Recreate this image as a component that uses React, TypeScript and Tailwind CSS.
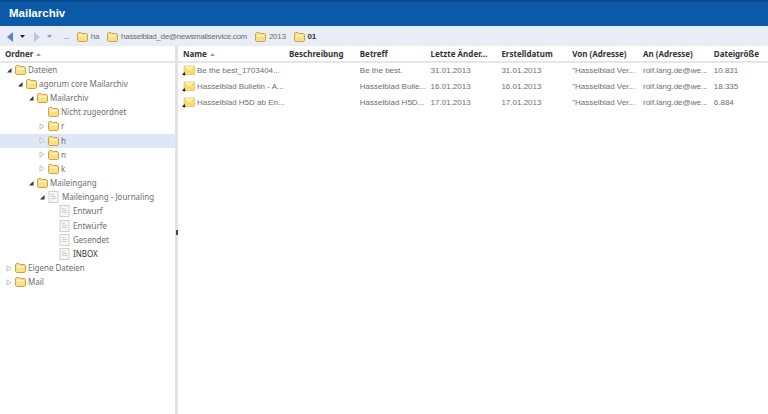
const tree = [
  { label: "Dateien", level: 0, arrow: "open", icon: "folder" },
  { label: "agorum core Mailarchiv", level: 1, arrow: "open", icon: "folder" },
  { label: "Mailarchiv", level: 2, arrow: "open", icon: "folder" },
  { label: "Nicht zugeordnet", level: 3, arrow: "none", icon: "folder" },
  { label: "r", level: 3, arrow: "closed", icon: "folder" },
  { label: "h", level: 3, arrow: "closed", icon: "folder", selected: true },
  { label: "n", level: 3, arrow: "closed", icon: "folder" },
  { label: "k", level: 3, arrow: "closed", icon: "folder" },
  { label: "Maileingang", level: 2, arrow: "open", icon: "folder" },
  { label: "Maileingang - Journaling", level: 3, arrow: "open", icon: "doc" },
  { label: "Entwurf", level: 4, arrow: "none", icon: "doc" },
  { label: "Entwürfe", level: 4, arrow: "none", icon: "doc" },
  { label: "Gesendet", level: 4, arrow: "none", icon: "doc" },
  { label: "INBOX", level: 4, arrow: "none", icon: "doc", dark: true },
  { label: "Eigene Dateien", level: 0, arrow: "closed", icon: "folder" },
  { label: "Mail", level: 0, arrow: "closed", icon: "folder" },
]

const columns = [
  "Beschreibung",
  "Betreff",
  "Letzte Änder...",
  "Erstelldatum",
  "Von (Adresse)",
  "An (Adresse)",
  "Dateigröße",
]

const mails = [
  { name: "Be the best_1703404...", subject: "Be the best.", changed: "31.01.2013", created: "31.01.2013", size: "10.831" },
  { name: "Hasselblad Bulletin - A...", subject: "Hasselblad Bulle...", changed: "16.01.2013", created: "16.01.2013", size: "18.335" },
  { name: "Hasselblad H5D ab En...", subject: "Hasselblad H5D...", changed: "17.01.2013", created: "17.01.2013", size: "6.884" },
]

function Folder() {
  return (
    <svg width="11" height="10" viewBox="0 0 11 10" className="shrink-0">
      <path d="M0.5 2 C0.5 1 1 0.5 2 0.5 H4 L5 1.5 H9 C10 1.5 10.5 2 10.5 3 V8 C10.5 9 10 9.5 9 9.5 H2 C1 9.5 0.5 9 0.5 8 Z" fill="#fbdf85" stroke="#c9a645" strokeWidth="1" />
      <rect x="2" y="3" width="7" height="1.5" fill="#fff6cf" />
    </svg>
  )
}

function Doc() {
  return (
    <svg width="12" height="12" viewBox="0 0 12 12" className="shrink-0">
      <rect x="1" y="0.5" width="9" height="11" fill="#f6f6f6" stroke="#cfcfcf" />
      <path d="M3 3.5 H6 M3 5.5 H8 M3 7.5 H8" stroke="#cfcfcf" strokeWidth="1" />
    </svg>
  )
}

function Mail() {
  return (
    <svg width="13" height="11" viewBox="0 0 13 11" className="shrink-0">
      <rect x="2" y="1" width="10.5" height="8.5" fill="#f8dc70" stroke="#d8bb55" strokeWidth="0.6" />
      <path d="M2.5 1.5 L7.5 5.5 L12 1.5 Z" fill="#fff3b8" />
      <path d="M0 9.8 L2.8 7 L3.4 10.5 Z" fill="#111" />
    </svg>
  )
}

function Arrow({ kind }: { kind: string }) {
  if (kind === "open") {
    return (
      <svg width="6" height="6" viewBox="0 0 6 6" className="shrink-0 mr-[3px]">
        <path d="M5.5 1 V5.5 H1 Z" fill="#333" />
      </svg>
    )
  }
  if (kind === "closed") {
    return (
      <svg width="6" height="7" viewBox="0 0 6 7" className="shrink-0 mr-[3px]">
        <path d="M1 0.8 L5 3.5 L1 6.2 Z" fill="#fff" stroke="#c0c0c0" />
      </svg>
    )
  }
  return <span className="w-[6px] shrink-0 mr-[3px]" />
}

function Crumb({ label, bold }: { label: string; bold?: boolean }) {
  return (
    <div className="flex items-center gap-[3px]">
      <Folder />
      <span className={bold ? "font-bold text-[#333]" : ""}>{label}</span>
    </div>
  )
}

export default function App() {
  return (
    <div className="w-[768px] h-[414px] overflow-hidden flex flex-col bg-white text-[8px] text-[#6e6e6e] font-['Noto_Sans',sans-serif]">
      <div className="h-[26px] shrink-0 flex items-center px-[9px] bg-[#0a5aa8] border-t-2 border-[#06498d] text-white font-bold text-[11.5px] font-['Liberation_Sans',sans-serif]">
        Mailarchiv
      </div>

      <div className="h-[20px] shrink-0 flex items-center bg-[#e9edf7] pl-[7px] pt-[1px] tracking-[-0.3px] font-['Liberation_Sans',sans-serif]">
        <svg width="6" height="10" viewBox="0 0 6 10">
          <path d="M6 0 V10 L0 5 Z" fill="#5a86c4" />
        </svg>
        <svg width="5" height="3" viewBox="0 0 5 3" className="ml-[7px]">
          <path d="M0 0 H5 L2.5 3 Z" fill="#223" />
        </svg>
        <svg width="6" height="10" viewBox="0 0 6 10" className="ml-[9px]">
          <path d="M0 0 V10 L6 5 Z" fill="#b9c8e2" />
        </svg>
        <svg width="5" height="3" viewBox="0 0 5 3" className="ml-[7px]">
          <path d="M0 0 H5 L2.5 3 Z" fill="#99a" />
        </svg>
        <span className="ml-[11px] mr-[8px]">...</span>
        <div className="flex items-center gap-[8px]">
          <Crumb label="ha" />
          <Crumb label="hasselblad_de@newsmailservice.com" />
          <Crumb label="2013" />
          <Crumb label="01" bold />
        </div>
      </div>

      <div className="flex-1 flex min-h-0">
        <div className="w-[175px] shrink-0 flex flex-col">
          <div className="h-[17px] shrink-0 flex items-center gap-[3px] pl-[5px] pt-[1px] font-bold text-[#333] border-b-2 border-[#e6e6e6]">
            Ordner
            <svg width="5" height="3" viewBox="0 0 5 3">
              <path d="M0 3 H5 L2.5 0 Z" fill="#8aa0c0" />
            </svg>
          </div>
          <div>
            {tree.map(row => (
              <div
                key={row.label}
                className={`h-[14.2px] flex items-center pb-[1px] ${row.selected ? "bg-[#dfe6f6]" : ""} ${row.level === 0 ? "pl-[6px]" : row.level === 1 ? "pl-[17px]" : row.level === 2 ? "pl-[28px]" : row.level === 3 ? "pl-[39px]" : "pl-[50px]"}`}
              >
                <Arrow kind={row.arrow} />
                {row.icon === "folder" ? <Folder /> : <Doc />}
                <span className={`ml-[2px] ${row.dark ? "text-[#333]" : ""}`}>{row.label}</span>
              </div>
            ))}
          </div>
        </div>

        <div className="w-[3px] shrink-0 bg-[#e2e2e2] flex items-center justify-center pt-[4px]">
          <div className="w-[2px] h-[5px] bg-[#444]" />
        </div>

        <div className="flex-1 flex flex-col min-w-0">
          <div className="h-[17px] shrink-0 flex items-center pt-[1px] font-bold text-[#333] border-b-2 border-[#e6e6e6]">
            <div className="w-[106px] shrink-0 pl-[5px] flex items-center gap-[3px]">
              Name
              <svg width="5" height="3" viewBox="0 0 5 3">
                <path d="M0 3 H5 L2.5 0 Z" fill="#8aa0c0" />
              </svg>
            </div>
            {columns.map(col => (
              <div key={col} className="w-[70.8px] shrink-0 pl-[5px] whitespace-nowrap">
                {col}
              </div>
            ))}
          </div>
          <div className="font-['Liberation_Sans',sans-serif]">
            {mails.map(mail => (
              <div key={mail.name} className="h-[16px] flex items-center pb-[1px] whitespace-nowrap">
                <div className="w-[106px] shrink-0 pl-[4px] flex items-center gap-[2px]">
                  <Mail />
                  {mail.name}
                </div>
                <div className="w-[70.8px] shrink-0" />
                <div className="w-[70.8px] shrink-0 pl-[5px]">{mail.subject}</div>
                <div className="w-[70.8px] shrink-0 pl-[5px]">{mail.changed}</div>
                <div className="w-[70.8px] shrink-0 pl-[5px]">{mail.created}</div>
                <div className="w-[70.8px] shrink-0 pl-[5px]">"Hasselblad Ver...</div>
                <div className="w-[70.8px] shrink-0 pl-[5px]">rolf.lang.de@we...</div>
                <div className="w-[50px] shrink-0 pl-[5px]">{mail.size}</div>
              </div>
            ))}
          </div>
        </div>
      </div>
    </div>
  )
}
